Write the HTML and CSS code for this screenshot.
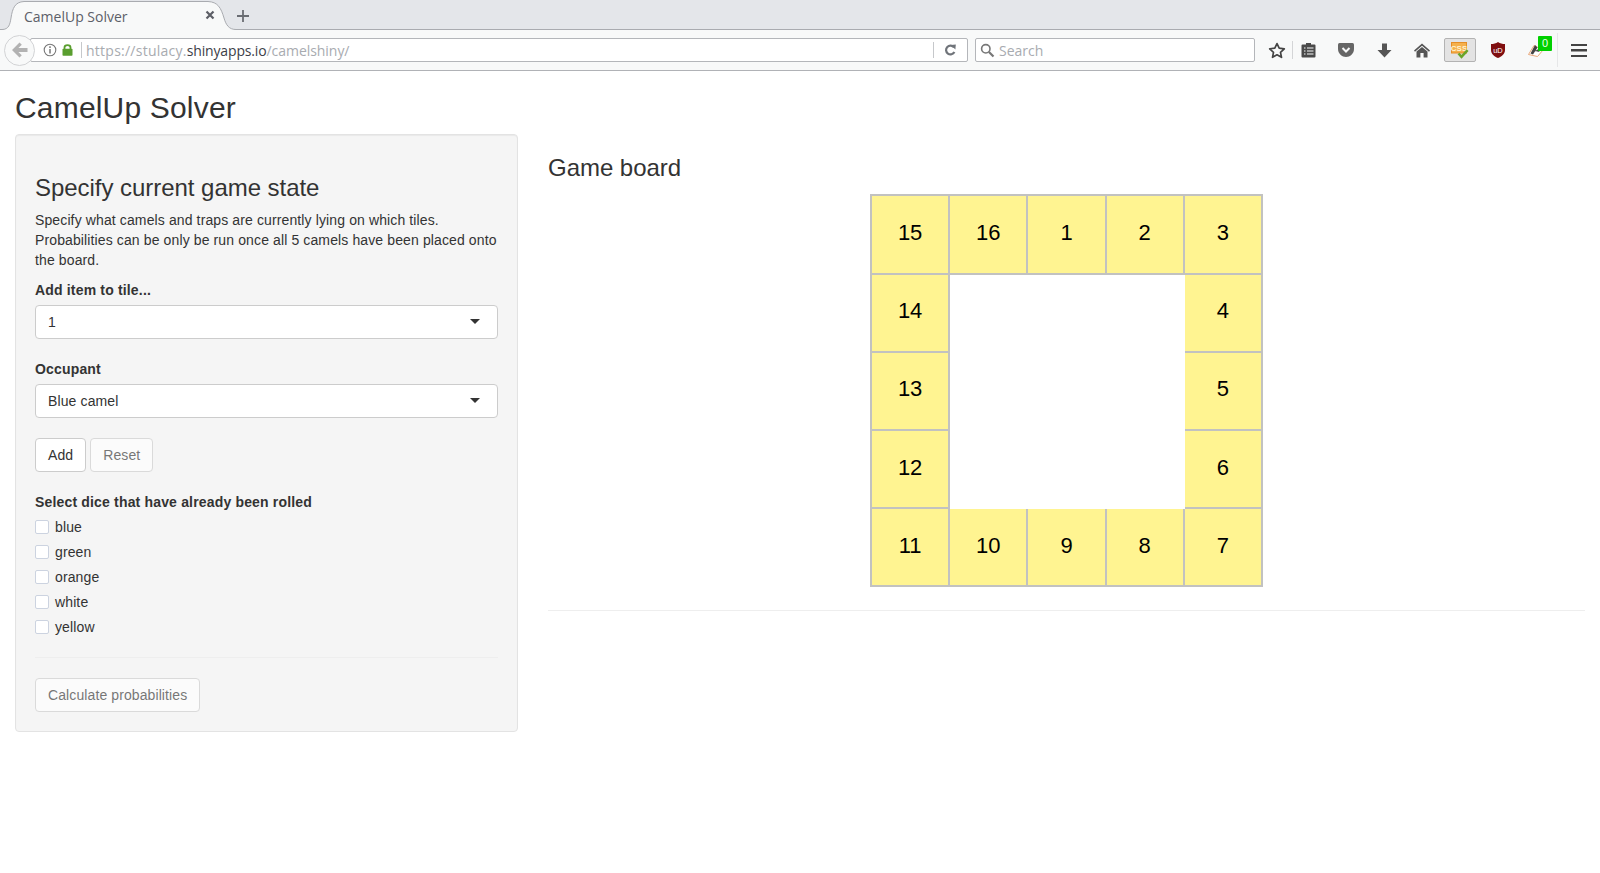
FILE: index.html
```html
<!DOCTYPE html>
<html lang="en">
    <head>
        <meta charset="utf-8">
        <title>CamelUp Solver</title>
        <link rel="stylesheet" href="styles.css">
    </head>
    <body>
        <!-- browser chrome -->
        <div class="tabstrip">
            <div class="tab">
                <svg class="tab-shape" width="236" height="30" viewBox="0 0 236 30">
                    <path d="M0 29.5 H2 C9 29.5 10 24 11 18 C12.5 8 15 2 24 1.5 H208 C218 2 221 8 224 18 C226 25 229 29.5 236 29.5 V30 H0 Z" fill="#f8f9f9"/>
                    <path d="M0 29.5 H2 C9 29.5 10 24 11 18 C12.5 8 15 2 24 1.5 H208 C218 2 221 8 224 18 C226 25 229 29.5 236 29.5" fill="none" stroke="#a9abb0"/>
                </svg>
                <span class="tab-title">CamelUp Solver</span>
                <svg class="tab-close" width="10" height="10" viewBox="0 0 10 10"><path d="M1.5 1.5 L8.5 8.5 M8.5 1.5 L1.5 8.5" stroke="#5c5f66" stroke-width="2.2"/></svg>
            </div>
            <svg class="tab-new" width="14" height="14" viewBox="0 0 14 14"><path d="M7 1 V13 M1 7 H13" stroke="#6a6d73" stroke-width="1.8"/></svg>
        </div>
        <div class="toolbar">
            <div class="back-btn">
                <svg width="18" height="16" viewBox="0 0 18 16"><path d="M8.5 0.5 L1 8 L8.5 15.5 L10.8 13.2 L7.4 10 H16.5 V6 H7.4 L10.8 2.8 Z" fill="#b2b2b2"/></svg>
            </div>
            <div class="urlbar">
                <svg class="url-icon" width="14" height="14" viewBox="0 0 14 14"><circle cx="7" cy="7" r="5.8" fill="none" stroke="#777" stroke-width="1.1"/><path d="M7 3.2 V5 M7 6 V10.6" stroke="#777" stroke-width="1.5"/></svg>
                <svg class="url-lock" width="11" height="12" viewBox="0 0 11 12"><path d="M2.5 5 V3.6 C2.5 0.4 8.5 0.4 8.5 3.6 V5" fill="none" stroke="#5a9e2f" stroke-width="1.8"/><rect x="0.5" y="4.8" width="10" height="7" rx="0.8" fill="#5a9e2f"/></svg>
                <span class="url-sep"></span>
                <span class="url-text">https://stulacy.<b>shinyapps.io</b><i>/camelshiny/</i></span>
                <span class="url-sep url-sep-end"></span>
                <svg class="url-reload" width="12" height="12" viewBox="0 0 12 12"><path d="M10 3.4 A4.4 4.4 0 1 0 10.4 8" fill="none" stroke="#70747a" stroke-width="2.2"/><path d="M6.8 1 L11.8 0.4 L11.4 5.6 Z" fill="#70747a"/></svg>
            </div>
            <div class="searchbar">
                <svg width="15" height="15" viewBox="0 0 15 15"><circle cx="5.8" cy="5.8" r="4.2" fill="none" stroke="#777" stroke-width="1.6"/><path d="M9 9 L13.5 13.5" stroke="#777" stroke-width="2.2"/></svg>
                <span class="search-text">Search</span>
            </div>
            <div class="tool tool-star">
                <svg width="18" height="17" viewBox="0 0 18 17"><path d="M9 1.6 L11.2 6.2 L16.3 6.8 L12.5 10.3 L13.5 15.3 L9 12.8 L4.5 15.3 L5.5 10.3 L1.7 6.8 L6.8 6.2 Z" fill="none" stroke="#444" stroke-width="1.7" stroke-linejoin="round"/></svg>
            </div>
            <span class="tool-sep"></span>
            <div class="tool tool-list">
                <svg width="15" height="16" viewBox="0 0 15 16"><path d="M1.5 2.5 H5 V1 H10 V2.5 H13.5 Q14.5 2.5 14.5 3.5 V14.5 Q14.5 15.5 13.5 15.5 H1.5 Q0.5 15.5 0.5 14.5 V3.5 Q0.5 2.5 1.5 2.5 Z" fill="#4a4a4a"/><path d="M3 6 H4.5 M6 6 H12.5 M3 9 H4.5 M6 9 H12.5 M3 12 H4.5 M6 12 H12.5" stroke="#f8f9f9" stroke-width="1.2"/></svg>
            </div>
            <div class="tool">
                <svg width="16" height="14" viewBox="0 0 16 14"><path d="M1.5 0 H14.5 Q16 0 16 1.5 V6 C16 10.5 12 14 8 14 C4 14 0 10.5 0 6 V1.5 Q0 0 1.5 0 Z" fill="#666"/><path d="M4.5 5 L8 8.5 L11.5 5" fill="none" stroke="#f8f9f9" stroke-width="2"/></svg>
            </div>
            <div class="tool">
                <svg width="15" height="15" viewBox="0 0 15 15"><path d="M5 0.5 H10 V7 H14.5 L7.5 14.5 L0.5 7 H5 Z" fill="#555"/></svg>
            </div>
            <div class="tool">
                <svg width="16" height="15" viewBox="0 0 16 15"><path d="M8 0.5 L16 7.5 L15 8.7 L8 2.8 L1 8.7 L0 7.5 Z" fill="#555"/><path d="M8 4 L13.5 8.6 V14.5 H9.6 V10 H6.4 V14.5 H2.5 V8.6 Z" fill="#555"/></svg>
            </div>
            <div class="css-btn">
                <svg width="18" height="17" viewBox="0 0 18 17">
                    <rect x="0.5" y="0.5" width="15" height="10.5" fill="#f5b04c" stroke="#e58e26"/>
                    <text x="8" y="8.6" class="css-label" text-anchor="middle">CSS</text>
                    <path d="M7.5 11.5 L10.5 14.8 L16.6 8.2" fill="none" stroke="#6aa52a" stroke-width="2.6"/>
                </svg>
            </div>
            <div class="tool tool-ublock">
                <svg width="14" height="16" viewBox="0 0 14 16"><path d="M7 0 C9 1.4 11.5 2 14 2 V8 C14 12 10.5 14.8 7 16 C3.5 14.8 0 12 0 8 V2 C2.5 2 5 1.4 7 0 Z" fill="#800f10"/><text x="7" y="10.8" class="ublock-label" text-anchor="middle">uD</text></svg>
            </div>
            <div class="tool tool-stylish">
                <svg class="stylish-icon" width="16" height="13" viewBox="0 0 16 13"><path d="M0.5 10.5 L6 1.5 L15 6 L9.5 12.5 Z" fill="#fff" stroke="#e8a77a"/><path d="M2.5 9.5 L7 1 L9.5 3.5 L5 10.5 Z M7 7 L10.5 5 L11.5 8 Z" fill="#444"/></svg>
                <span class="badge">0</span>
            </div>
            <span class="tool-sep tool-sep-tall"></span>
            <div class="tool tool-menu">
                <span class="menu-bars"></span>
            </div>
        </div>

        <!-- the app -->
        <div class="page">
            <h2 class="page-title">CamelUp Solver</h2>
            <div class="layout">
                <form class="well">
                    <h3>Specify current game state</h3>
                    <p>Specify what camels and traps are currently lying on which tiles. Probabilities can be only be run once all 5 camels have been placed onto the board.</p>
                    <div class="form-group">
                        <label class="field-label" for="tile">Add item to tile...</label>
                        <div class="select-wrap">
                            <select id="tile"><option>1</option></select>
                        </div>
                    </div>
                    <div class="form-group">
                        <label class="field-label" for="occupant">Occupant</label>
                        <div class="select-wrap">
                            <select id="occupant"><option>Blue camel</option></select>
                        </div>
                    </div>
                    <div class="form-group button-row">
                        <button type="button" class="btn">Add</button>
                        <button type="button" class="btn" disabled>Reset</button>
                    </div>
                    <div class="form-group dice-group">
                        <div class="field-label">Select dice that have already been rolled</div>
                        <label class="check"><input type="checkbox"> blue</label>
                        <label class="check"><input type="checkbox"> green</label>
                        <label class="check"><input type="checkbox"> orange</label>
                        <label class="check"><input type="checkbox"> white</label>
                        <label class="check"><input type="checkbox"> yellow</label>
                    </div>
                    <hr>
                    <button type="button" class="btn" disabled>Calculate probabilities</button>
                </form>
                <div class="main">
                    <h3>Game board</h3>
                    <div class="board">
                        <div class="tile">15</div>
                        <div class="tile">16</div>
                        <div class="tile">1</div>
                        <div class="tile">2</div>
                        <div class="tile">3</div>
                        <div class="tile">14</div>
                        <div class="hole"></div>
                        <div class="tile">4</div>
                        <div class="tile">13</div>
                        <div class="tile">5</div>
                        <div class="tile">12</div>
                        <div class="tile">6</div>
                        <div class="tile">11</div>
                        <div class="tile">10</div>
                        <div class="tile">9</div>
                        <div class="tile">8</div>
                        <div class="tile">7</div>
                    </div>
                    <hr class="main-rule">
                </div>
            </div>
        </div>
    </body>
</html>
```

FILE: styles.css
```css
* {
    box-sizing: border-box;
}
body {
    margin: 0;
    background-color: #fff;
    color: #333;
    font-family: "Liberation Sans", Arial, sans-serif;
    font-size: 14px;
    line-height: 20px;
}

/* browser chrome */
.tabstrip {
    display: flex;
    align-items: center;
    height: 30px;
    background-color: #e4e6ea;
    border-bottom: 1px solid #a9abb0;
}
.tab {
    position: relative;
    display: flex;
    align-items: center;
    width: 236px;
    height: 30px;
    padding: 4px 0 0 24px;
    margin-top: 1px;
    font-family: "Open Sans", sans-serif;
    font-size: 14px;
    color: #5c6068;
}
.tab-shape {
    position: absolute;
    left: 0;
    top: 0;
}
.tab-title {
    position: relative;
    width: 181px;
}
.tab-close {
    position: relative;
    margin-top: -4px;
}
.tab-new {
    margin-top: 3px;
}
.toolbar {
    display: flex;
    align-items: center;
    height: 41px;
    background-color: #f8f9f9;
    border-bottom: 1px solid #b0b2b6;
    padding-left: 4px;
}
.back-btn {
    position: relative;
    z-index: 1;
    display: flex;
    align-items: center;
    justify-content: center;
    width: 31px;
    height: 31px;
    border: 1px solid #d2d3d5;
    border-radius: 50%;
    background-color: #f8f9f9;
}
.urlbar, .searchbar {
    display: flex;
    align-items: center;
    height: 24px;
    background-color: #fff;
    border: 1px solid #b4b6ba;
    border-radius: 2px;
    font-family: "Open Sans", sans-serif;
    font-size: 14px;
    color: #a8abb0;
}
.urlbar {
    flex: 1;
    margin-left: -5px;
    padding-left: 12px;
}
.url-icon {
    margin-right: 5px;
}
.url-lock {
    margin-right: 8px;
}
.url-sep {
    width: 1px;
    height: 16px;
    background-color: #c6c8cb;
    margin-right: 4px;
}
.url-text {
    flex: 1;
    padding-top: 2px;
    letter-spacing: .25px;
}
.url-text b {
    font-weight: normal;
    color: #3c4048;
    letter-spacing: -.15px;
}
.url-text i {
    font-style: normal;
    letter-spacing: -.05px;
}
.url-sep-end {
    margin-right: 10px;
}
.url-reload {
    margin-right: 11px;
}
.searchbar {
    width: 280px;
    margin-left: 7px;
    padding-left: 4px;
    gap: 4px;
}
.search-text {
    padding-top: 2px;
}
.tool {
    position: relative;
    display: flex;
    align-items: center;
    justify-content: center;
    flex: none;
    width: 38px;
    height: 24px;
}
.tool-star {
    width: 30px;
    margin-left: 7px;
}
.tool-sep {
    width: 1px;
    height: 18px;
    background-color: #d4d5d7;
}
.tool-sep-tall {
    height: 34px;
    margin-left: 2px;
    background-color: #e6e7e8;
}
.tool-list {
    margin-left: -4px;
}
.css-btn {
    display: flex;
    align-items: center;
    justify-content: center;
    width: 32px;
    height: 24px;
    margin-left: 3px;
    background-color: #e3e3e3;
    border: 1px solid #b3b3b3;
    border-radius: 2px;
}
.css-label {
    font-family: "Liberation Sans", sans-serif;
    font-size: 8px;
    font-weight: bold;
    fill: #fff3d0;
}
.ublock-label {
    font-family: "Liberation Sans", sans-serif;
    font-size: 7.5px;
    fill: #fff;
}
.tool-ublock {
    margin-left: 3px;
}
.stylish-icon {
    margin-left: -1px;
    margin-top: 1px;
}
.badge {
    position: absolute;
    left: 21px;
    top: -2px;
    width: 14px;
    height: 15px;
    background-color: #00d000;
    border-radius: 1px;
    color: #eaffea;
    font-family: "Liberation Sans", sans-serif;
    font-size: 11px;
    line-height: 15px;
    text-align: center;
}
.tool-menu {
    width: 42px;
}
.menu-bars {
    width: 16px;
    height: 13px;
    border-top: 2.5px solid #444;
    border-bottom: 2.5px solid #444;
    background: linear-gradient(#444, #444) center / 100% 2.5px no-repeat;
}

/* the app */
.page {
    padding: 0 15px;
}
.page-title {
    margin: 20px 0 10px;
    font-size: 30px;
    font-weight: 500;
    line-height: 33px;
    letter-spacing: .18px;
}
.layout {
    display: flex;
    align-items: flex-start;
    gap: 30px;
}
.well {
    flex: none;
    width: 503px;
    padding: 19px;
    background-color: #f5f5f5;
    border: 1px solid #e3e3e3;
    border-radius: 4px;
    box-shadow: inset 0 1px 1px rgba(0, 0, 0, .05);
    letter-spacing: .12px;
}
h3 {
    margin: 21px 0 9px;
    font-size: 24px;
    font-weight: 500;
    line-height: 26.4px;
    letter-spacing: -.04px;
}
.well p {
    margin: 0 0 10px;
}
.form-group {
    margin-bottom: 20px;
}
.dice-group {
    margin-bottom: 15px;
}
.field-label {
    display: block;
    margin-bottom: 5px;
    font-weight: bold;
    letter-spacing: .17px;
}
.select-wrap {
    position: relative;
}
.select-wrap::after {
    content: "";
    position: absolute;
    right: 18px;
    top: 14px;
    border-style: solid;
    border-width: 5px 5px 0;
    border-color: #333 transparent transparent;
}
select {
    display: block;
    width: 100%;
    height: 34px;
    padding: 6px 12px;
    appearance: none;
    background-color: #fff;
    border: 1px solid #ccc;
    border-radius: 4px;
    color: #333;
    font-family: inherit;
    font-size: 14px;
    letter-spacing: inherit;
}
.btn {
    height: 34px;
    padding: 6px 12px;
    background-color: #fff;
    border: 1px solid #ccc;
    border-radius: 4px;
    color: #333;
    font-family: inherit;
    font-size: 14px;
    line-height: 20px;
    letter-spacing: .1px;
}
.btn:disabled {
    opacity: .65;
}
.check {
    display: flex;
    align-items: center;
    gap: 6px;
    height: 20px;
    margin-bottom: 5px;
}
.check input {
    appearance: none;
    width: 14px;
    height: 14px;
    margin: 0;
    background-color: #fff;
    border: 1px solid #ccd3e0;
    border-radius: 2px;
}
hr {
    margin: 20px 0;
    border: 0;
    border-top: 1px solid #eee;
}
.main {
    flex: 1;
}
.board {
    display: grid;
    grid-template-columns: repeat(5, 78.2px);
    grid-auto-rows: 78.2px;
    width: max-content;
    margin: 13px auto 0;
    border-top: 2px solid #c2c2c0;
    border-left: 2px solid #c2c2c0;
    color: #000;
    font-size: 22px;
}
.tile {
    display: flex;
    align-items: center;
    justify-content: center;
    padding-bottom: 3px;
    background-color: #fff491;
    border-right: 2px solid #c2c2c0;
    border-bottom: 2px solid #c2c2c0;
}
.hole {
    grid-column: span 3;
    grid-row: span 3;
}
.main-rule {
    margin: 23px 0 0;
}
```
